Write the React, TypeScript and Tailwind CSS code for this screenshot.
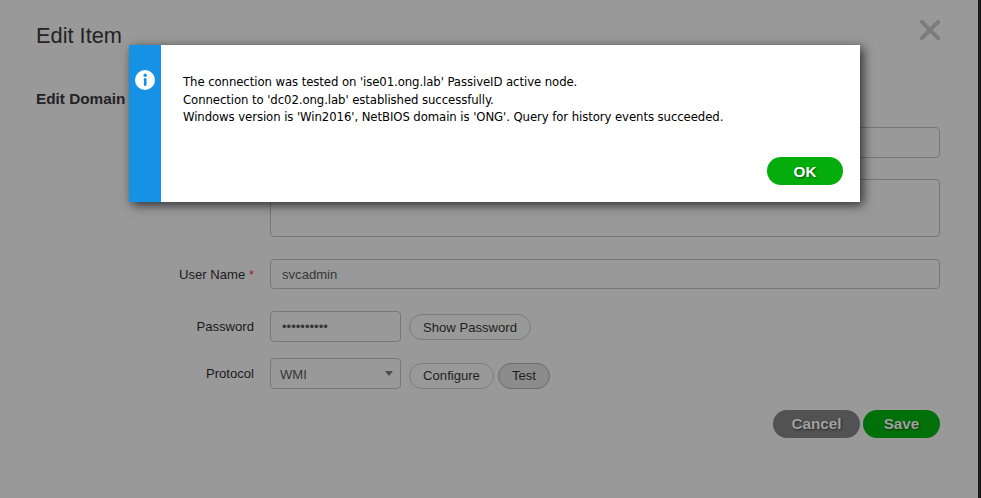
import type { ReactNode } from "react";

function Row({ label, required, className, children }: { label?: string; required?: boolean; className: string; children: ReactNode }) {
  return (
    <div className={`flex ${className}`}>
      <label className="w-[254px] shrink-0 pt-2 text-right text-[13.1px] leading-4 text-[#1a1a1c]">
        {label}
        {required && <span className="text-[#9c1c20]"> *</span>}
      </label>
      <div className="ml-4 flex">{children}</div>
    </div>
  );
}

function Pill({ children, className }: { children: ReactNode; className: string }) {
  return (
    <button className={`flex h-[26px] items-center justify-center rounded-full border text-[13.1px] leading-4 text-[#1f1f20] ${className}`}>
      {children}
    </button>
  );
}

function Action({ children, className }: { children: ReactNode; className: string }) {
  return (
    <button className={`flex h-7 items-center justify-center rounded-full leading-[18px] font-bold [text-shadow:1px_1px_2px_rgba(0,0,0,0.5)] ${className}`}>
      {children}
    </button>
  );
}

const field = "rounded-[4px] border border-[#77777a] text-[13.1px] text-[#363638]";

function InfoDialog() {
  return (
    <div role="dialog" className="absolute top-[45px] left-[129px] flex h-[157px] w-[731px] bg-white shadow-[3px_3px_10px_0px_rgba(0,0,0,0.7)]">
      <div className="flex w-8 shrink-0 justify-center bg-[#1592e6] pt-[25px]">
        <svg width="20" height="20" viewBox="0 0 20 20">
          <circle cx="10" cy="10" r="10" fill="white" />
          <circle cx="10.2" cy="5.3" r="1.7" fill="#1592e6" />
          <rect x="8.9" y="8" width="2.6" height="8" rx="1.2" fill="#1592e6" />
        </svg>
      </div>
      <div className="flex flex-1 flex-col justify-between pt-[28px] pr-[17px] pb-[17px] pl-[22px]">
        <div className="font-['DejaVu_Sans_Condensed','DejaVu_Sans',sans-serif] text-[13px] leading-[17.6px] tracking-[-0.08px] whitespace-nowrap text-black">
          <p>The connection was tested on 'ise01.ong.lab' PassiveID active node.</p>
          <p>Connection to 'dc02.ong.lab' established successfully.</p>
          <p>Windows version is 'Win2016', NetBIOS domain is 'ONG'. Query for history events succeeded.</p>
        </div>
        <Action className="w-[76px] self-end bg-[#04ac0c] pt-0.5 text-[15.2px] text-white">OK</Action>
      </div>
    </div>
  );
}

export default function App() {
  return (
    <div className="relative flex h-[498px] w-[981px] overflow-hidden bg-[#181819] font-['Liberation_Sans',Arial,sans-serif]">
      <main className="w-[978px] bg-[#999999]">
        <header className="flex h-[84px] justify-between pt-5 pr-[38px] pl-[36px]">
          <h1 className="pt-[3px] text-[21.8px] leading-[26px] text-[#232324]">Edit Item</h1>
          <svg width="20" height="20" viewBox="0 0 20 20" stroke="#7b7b7b" strokeWidth="3.8" strokeLinecap="round">
            <path d="M1.9 1.9 18.1 18.1M18.1 1.9 1.9 18.1" />
          </svg>
        </header>
        <h2 className="h-[43px] pt-[6px] pl-[36px] text-[15.3px] leading-[18px] font-bold text-[#232324]">Edit Domain</h2>
        <Row className="h-[52px]">
          <div className={`h-[31px] w-[670px] ${field}`} />
        </Row>
        <Row className="h-20">
          <div className={`h-[58px] w-[670px] ${field}`} />
        </Row>
        <Row className="h-[52px]" label="User Name" required>
          <div className={`flex h-[30px] w-[670px] items-center pt-px pl-[11px] ${field}`}>svcadmin</div>
        </Row>
        <Row className="h-[47px]" label="Password">
          <div className={`flex h-[31px] w-[131px] items-center pl-[11px] ${field}`}>••••••••••</div>
          <Pill className="mt-[3px] ml-2 w-[122px] border-[#7d7d7d] pt-px">Show Password</Pill>
        </Row>
        <Row className="h-[52px]" label="Protocol">
          <div className={`flex h-[31px] w-[131px] items-center justify-between pr-[7px] pl-[9px] ${field}`}>
            <span className="pt-0.5">WMI</span>
            <span className="border-x-4 border-t-5 border-x-transparent border-t-[#4c4c4c]" />
          </div>
          <Pill className="mt-[5px] ml-2 w-[85px] border-[#7d7d7d]">Configure</Pill>
          <Pill className="mt-[5px] ml-1 w-[52px] border-[#6b6b6b] bg-[#8c8c8c]">Test</Pill>
        </Row>
        <footer className="flex justify-end gap-[3px] pr-[38px]">
          <Action className="w-[87px] bg-[#525252] text-[15.3px] text-[#a0a0a0]">Cancel</Action>
          <Action className="w-[77px] bg-[#02700a] text-[15.3px] text-[#a0a0a0]">Save</Action>
        </footer>
      </main>
      <InfoDialog />
    </div>
  );
}
